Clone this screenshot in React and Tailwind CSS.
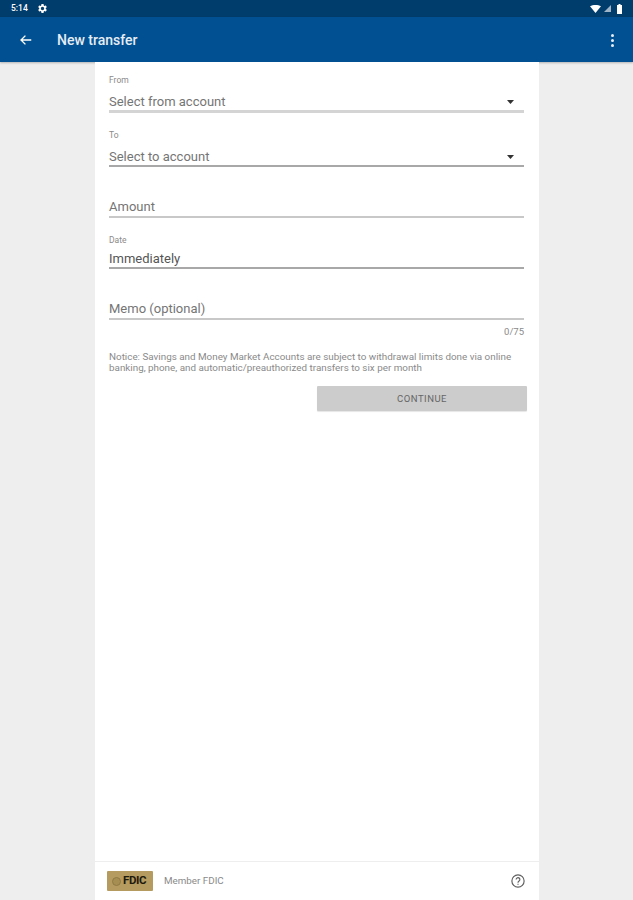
import React from 'react';

function SelectField( { label, value, top, row } )
{
  return (
    <div className={ top }>
      <div className="h-[10px] text-[8.500px] leading-[10px] text-[#8a8a8a]">{ label }</div>
      <div className={ "flex items-center justify-between pr-[10px] " + row }>
        <span className="text-[13px] leading-[18px] text-[#757575]">{ value }</span>
        <svg width="7" height="4" viewBox="0 0 7 4"><path d="M0 0h7L3.500 4z" fill="#333" /></svg>
      </div>
    </div>
  );
}

function TextField( { label, value, top, dark } )
{
  return (
    <div className={ top }>
      { label && <div className="h-[10px] text-[8.500px] leading-[10px] text-[#8a8a8a]">{ label }</div> }
      <div className={ "h-[24px] border-b-2 text-[13px] leading-[18px] " + ( dark ? "border-[#a8a8a8] pt-[5px] text-[#555555]" : "border-[#c8c8c8] pt-[4px] text-[#757575]" ) }>
        { value }
      </div>
    </div>
  );
}

export default function App()
{
  return (
    <div className="flex h-[900px] flex-col overflow-hidden bg-[#eeeeee] font-['Roboto',sans-serif]">
      <div className="flex h-[17px] items-center justify-between bg-[#003c6c] pl-[11px] pr-[11px]">
        <div className="flex items-center gap-[9px]">
          <span className="text-[8.500px] font-medium text-white">5:14</span>
          <svg width="11" height="11" viewBox="0 0 24 24" fill="white">
            <path d="M19.14 12.94c.04-.3.06-.61.06-.94 0-.32-.02-.64-.07-.94l2.03-1.58c.18-.14.23-.41.12-.61l-1.92-3.32c-.12-.22-.37-.29-.59-.22l-2.39.96c-.5-.38-1.03-.7-1.62-.94l-.36-2.54c-.04-.24-.24-.41-.48-.41h-3.84c-.24 0-.43.17-.47.41l-.36 2.54c-.59.24-1.13.57-1.62.94l-2.39-.96c-.22-.08-.47 0-.59.22L2.74 8.87c-.12.21-.08.47.12.61l2.03 1.58c-.05.3-.09.63-.09.94s.02.64.07.94l-2.03 1.58c-.18.14-.23.41-.12.61l1.92 3.32c.12.22.37.29.59.22l2.39-.96c.5.38 1.03.7 1.62.94l.36 2.54c.05.24.24.41.48.41h3.84c.24 0 .44-.17.47-.41l.36-2.54c.59-.24 1.13-.56 1.62-.94l2.39.96c.22.08.47 0 .59-.22l1.92-3.32c.12-.22.07-.47-.12-.61l-2.01-1.58zM12 15.6c-1.98 0-3.6-1.62-3.6-3.6s1.62-3.6 3.6-3.6 3.6 1.62 3.6 3.6-1.62 3.6-3.6 3.6z" />
          </svg>
        </div>
        <div className="flex items-center gap-[3px]">
          <svg width="11" height="8" viewBox="0 0 11 8"><path d="M0 1.200C3-.4 8-.4 11 1.200L5.500 8z" fill="white" /></svg>
          <svg width="7" height="7" viewBox="0 0 7 7"><path d="M7 0v7H0z" fill="#9fb4c6" /></svg>
          <svg className="ml-[3px]" width="5" height="10" viewBox="0 0 5 10"><path d="M1.500 0h2v1H5v9H0V1h1.500z" fill="white" /></svg>
        </div>
      </div>

      <div className="flex h-[45px] items-center bg-[#005092] pt-[1px] shadow-[0_1px_2px_rgba(0,0,0,0.25)]">
        <svg className="ml-[19px]" width="14" height="14" viewBox="0 0 24 24" fill="none" stroke="white" strokeWidth="2.400">
          <path d="M21 12H4M11 4.500 3.500 12l7.500 7.500" />
        </svg>
        <span className="ml-[24px] text-[14px] font-medium text-[#e6edf4]">New transfer</span>
        <div className="ml-auto mr-[19px] flex flex-col gap-[2px]">
          <span className="h-[3px] w-[3px] rounded-full bg-[#e6edf4]" />
          <span className="h-[3px] w-[3px] rounded-full bg-[#e6edf4]" />
          <span className="h-[3px] w-[3px] rounded-full bg-[#e6edf4]" />
        </div>
      </div>

      <div className="ml-[95px] flex w-[444px] flex-1 flex-col bg-white">
        <div className="flex flex-1 flex-col pl-[14px] pr-[15px] pt-[13px]">
          <SelectField label="From" value="Select from account" row="h-[28px] border-b-[3px] border-[#d4d4d4] pt-[9px]" />
          <SelectField top="mt-[17px]" label="To" value="Select to account" row="h-[27px] border-b-2 border-[#a8a8a8] pt-[8px]" />
          <TextField top="mt-[27px]" value="Amount" />
          <TextField top="mt-[17px]" label="Date" value="Immediately" dark />
          <TextField top="mt-[27px]" value="Memo (optional)" />
          <div className="mt-[6px] text-right text-[9.500px] leading-[12px] text-[#8a8a8a]">0/75</div>
          <p className="mt-[13px] text-[9.850px] leading-[11px] text-[#8a8a8a]">
            Notice: Savings and Money Market Accounts are subject to withdrawal limits done via online banking, phone, and automatic/preauthorized transfers to six per month
          </p>
          <button className="-mr-[3px] mt-[13px] h-[25px] w-[210px] self-end rounded-[1px] bg-[#cccccc] pt-[1px] text-[9.500px] tracking-[0.5px] text-[#666666] shadow-[0_1px_1px_rgba(0,0,0,0.1)]">
            CONTINUE
          </button>
        </div>

        <div className="flex h-[39px] items-center border-t border-[#eeeeee] pl-[12px] pr-[14px]">
          <div className="flex h-[20px] w-[46px] items-center rounded-[1px] bg-[#b59b5f] pl-[5px]">
            <span className="h-[9px] w-[9px] rounded-full border border-[#8f7a45] bg-[#a68d52]" />
            <span className="ml-[2px] text-[11.500px] font-bold leading-none tracking-[-0.4px] text-[#1f1a0e]">FDIC</span>
          </div>
          <span className="ml-[11px] text-[9.800px] text-[#8a8a8a]">Member FDIC</span>
          <svg className="ml-auto" width="14" height="14" viewBox="0 0 24 24" fill="none" stroke="#5f5f5f" strokeWidth="2">
            <circle cx="12" cy="12" r="10.500" />
            <path d="M8.800 9.500a3.200 3.200 0 1 1 5 2.600c-1.200.8-1.800 1.400-1.800 2.900M12 16.500v2" />
          </svg>
        </div>
      </div>
    </div>
  );
}
